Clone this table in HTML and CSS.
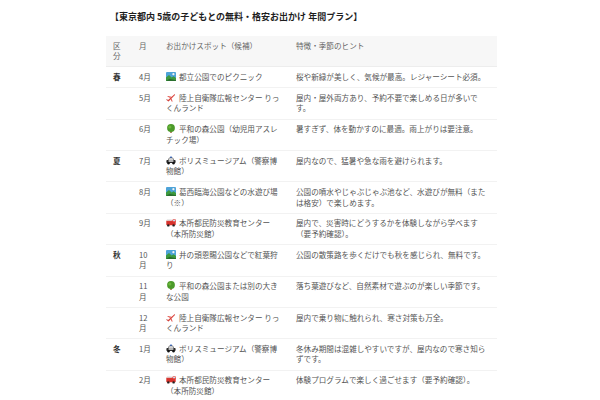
FILE: index.html
```html
<!DOCTYPE html>
<html lang="ja">
<head>
<meta charset="utf-8">
<title>年間プラン</title>
<link rel="stylesheet" href="styles.css">
</head>
<body>
<svg class="defs" width="0" height="0" aria-hidden="true">
  <defs>
    <symbol id="park" viewBox="0 0 10 9">
      <rect x="0" y="0" width="10" height="9" rx="1" fill="#4ea3d8"/>
      <circle cx="7.4" cy="2.2" r="1.1" fill="#f3f3f3"/>
      <path d="M0 9V5.6L3 3l2.6 2.6L7.6 4.2 10 6V9Z" fill="#3d9a3f"/>
      <path d="M0 9 3.5 6.8 10 8.2V9Z" fill="#2a6f2e"/>
    </symbol>
    <symbol id="plane" viewBox="0 0 10 9">
      <path d="M1.2 7.8 8.2 1.4c.5-.4 1.1 0 .8.6L2.6 8.6Z" fill="#d8413a"/>
      <path d="M4.2 5 1.2 3.6 2 3l3.6.8Z" fill="#e35a52"/>
      <path d="M5.6 5.4 6.6 8.4 5.9 8.8 4.6 6.4Z" fill="#e35a52"/>
      <path d="M1.2 7.8 0.2 6.6l.6-.3 1.3.8Z" fill="#b3302b"/>
    </symbol>
    <symbol id="tree" viewBox="0 0 10 9">
      <rect x="4.3" y="5.5" width="1.4" height="3.5" fill="#8a5a2b"/>
      <circle cx="5" cy="4" r="3.9" fill="#4c9a2a"/>
      <circle cx="3.8" cy="3" r="1.6" fill="#6cb83c"/>
    </symbol>
    <symbol id="police" viewBox="0 0 10 9">
      <rect x="4" y="0.6" width="2" height="1.3" fill="#3a6fd0"/>
      <path d="M2.2 4.2 3.2 1.9h3.6l1 2.3Z" fill="#f2f2f2" stroke="#333" stroke-width=".5"/>
      <rect x="0.4" y="4" width="9.2" height="3" rx=".8" fill="#2b2b2b"/>
      <rect x="2.6" y="4.3" width="4.8" height="1.4" fill="#f2f2f2"/>
      <circle cx="2.5" cy="7.3" r="1.2" fill="#111"/>
      <circle cx="7.5" cy="7.3" r="1.2" fill="#111"/>
    </symbol>
    <symbol id="fire" viewBox="0 0 10 9">
      <rect x="0.3" y="2.4" width="9.4" height="4.8" rx=".6" fill="#d8322c"/>
      <rect x="6.6" y="1.2" width="3.1" height="3" rx=".4" fill="#e8453e"/>
      <rect x="7.1" y="1.8" width="2" height="1.4" fill="#bfe3f5"/>
      <path d="M0.8 1.6H6M0.8 2.6H6M1.6 1.4V2.8M3 1.4V2.8M4.4 1.4V2.8" stroke="#ddd" stroke-width=".5"/>
      <circle cx="2.3" cy="7.4" r="1.2" fill="#222"/>
      <circle cx="7.6" cy="7.4" r="1.2" fill="#222"/>
    </symbol>
  </defs>
</svg>
<main class="page">
  <h1 class="title">【東京都内 5歳の子どもとの無料・格安お出かけ 年間プラン】</h1>
  <table class="plan">
    <thead>
      <tr>
        <th class="c-season">区分</th>
        <th class="c-month">月</th>
        <th class="c-spot">お出かけスポット（候補）</th>
        <th class="c-note">特徴・季節のヒント</th>
      </tr>
    </thead>
    <tbody>
      <tr>
        <td class="season">春</td><td>4月</td>
        <td><svg class="ico"><use href="#park"/></svg>都立公園でのピクニック</td>
        <td>桜や新緑が美しく、気候が最高。レジャーシート必須。</td>
      </tr>
      <tr>
        <td></td><td>5月</td>
        <td><svg class="ico"><use href="#plane"/></svg>陸上自衛隊広報センター りっくんランド</td>
        <td>屋内・屋外両方あり、予約不要で楽しめる日が多いです。</td>
      </tr>
      <tr>
        <td></td><td>6月</td>
        <td><svg class="ico"><use href="#tree"/></svg>平和の森公園（幼児用アスレチック場）</td>
        <td>暑すぎず、体を動かすのに最適。雨上がりは要注意。</td>
      </tr>
      <tr>
        <td class="season">夏</td><td>7月</td>
        <td><svg class="ico"><use href="#police"/></svg>ポリスミュージアム（警察博物館）</td>
        <td>屋内なので、猛暑や急な雨を避けられます。</td>
      </tr>
      <tr>
        <td></td><td>8月</td>
        <td><svg class="ico"><use href="#park"/></svg>葛西臨海公園などの水遊び場（※）</td>
        <td>公園の噴水やじゃぶじゃぶ池など、水遊びが無料（または格安）で楽しめます。</td>
      </tr>
      <tr>
        <td></td><td>9月</td>
        <td><svg class="ico"><use href="#fire"/></svg>本所都民防災教育センター（本所防災館）</td>
        <td>屋内で、災害時にどうするかを体験しながら学べます（要予約確認）。</td>
      </tr>
      <tr>
        <td class="season">秋</td><td>10月</td>
        <td><svg class="ico"><use href="#park"/></svg>井の頭恩賜公園などで紅葉狩り</td>
        <td>公園の散策路を歩くだけでも秋を感じられ、無料です。</td>
      </tr>
      <tr>
        <td></td><td>11月</td>
        <td><svg class="ico"><use href="#tree"/></svg>平和の森公園または別の大きな公園</td>
        <td>落ち葉遊びなど、自然素材で遊ぶのが楽しい季節です。</td>
      </tr>
      <tr>
        <td></td><td>12月</td>
        <td><svg class="ico"><use href="#plane"/></svg>陸上自衛隊広報センター りっくんランド</td>
        <td>屋内で乗り物に触れられ、寒さ対策も万全。</td>
      </tr>
      <tr>
        <td class="season">冬</td><td>1月</td>
        <td><svg class="ico"><use href="#police"/></svg>ポリスミュージアム（警察博物館）</td>
        <td>冬休み期間は混雑しやすいですが、屋内なので寒さ知らずです。</td>
      </tr>
      <tr>
        <td></td><td>2月</td>
        <td><svg class="ico"><use href="#fire"/></svg>本所都民防災教育センター（本所防災館）</td>
        <td>体験プログラムで楽しく過ごせます（要予約確認）。</td>
      </tr>
    </tbody>
  </table>
</main>
</body>
</html>
```

FILE: styles.css
```css
html, body {
  margin: 0;
  padding: 0;
  background: #ffffff;
}

body {
  font-family: "Noto Sans CJK JP", "Noto Sans", sans-serif;
  color: #555555;
}

.defs {
  position: absolute;
  width: 0;
  height: 0;
  overflow: hidden;
}

.page {
  padding: 11px 0 0 106px;
}

.title {
  margin: 0 0 13px 4px;
  font-size: 9px;
  line-height: 12px;
  font-weight: 700;
  color: #1e1e1e;
}

.plan {
  width: 391px;
  table-layout: fixed;
  border-collapse: collapse;
  font-size: 7.6px;
  line-height: 10.5px;
}

.plan th,
.plan td {
  padding: 4.7px 7px;
  text-align: left;
  vertical-align: top;
  font-weight: 400;
  border-bottom: 1px solid #f2f2f2;
}

.plan th {
  background: #f7f7f7;
  color: #666666;
  border-bottom: 1px solid #ededed;
}

.c-season { width: 12px; }
.c-month { width: 13px; }
.c-spot { width: 116px; }
.c-note { width: 194px; }

.plan td.season {
  font-weight: 700;
  color: #333333;
}

.ico {
  display: inline-block;
  width: 10px;
  height: 9px;
  margin-right: 3px;
  vertical-align: -1px;
}
```
